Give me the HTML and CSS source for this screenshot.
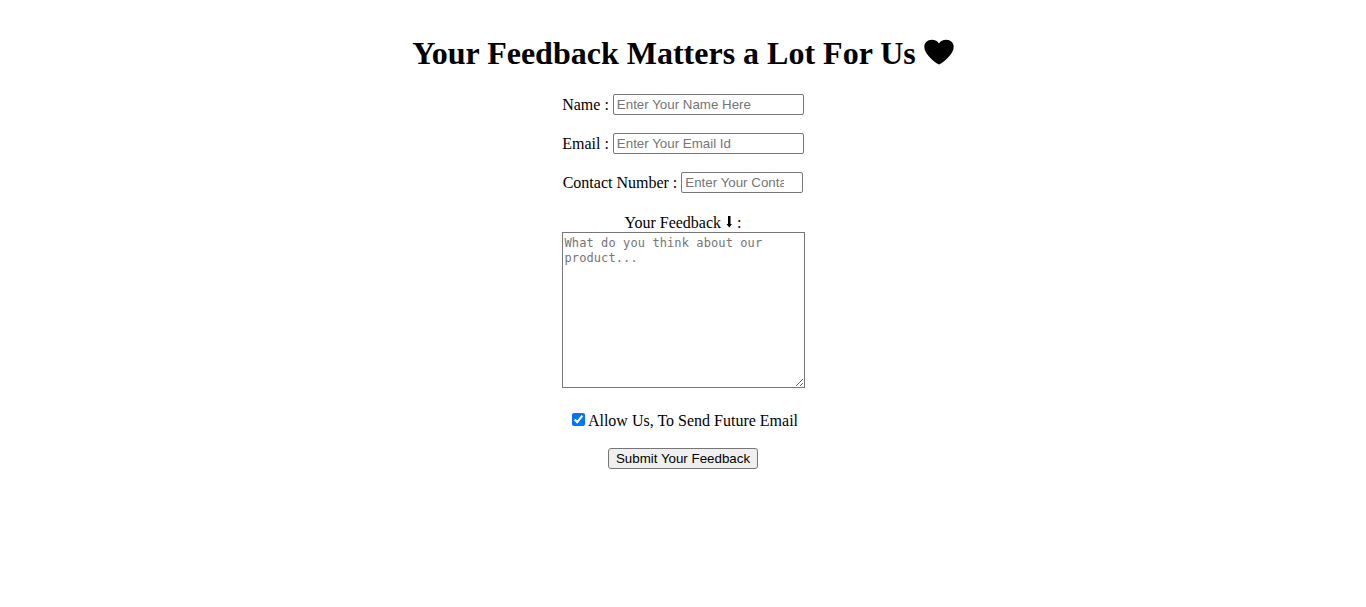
FILE: index.html
```html
<!DOCTYPE html>
<html lang="en">
<head>
<meta charset="utf-8">
<title>Feedback Form</title>
<link rel="stylesheet" href="styles.css">
</head>
<body>
<form class="feedback">
<h1 class="title">Your Feedback Matters a Lot For Us <svg class="heart" viewBox="0 0 30 26"><path d="M15 25.500C12 24 8.500 21.500 5 17.500C2 14 .3 11 .3 7.800C.3 3.800 3.500 .8 7.800 .8C11 .8 13.500 2 15 4.500C16.500 2 19 .8 22.200 .8C26.500 .8 29.700 3.800 29.700 7.800C29.700 11 28 14 25 17.500C21.500 21.500 18 24 15 25.500Z"/></svg></h1>
<div class="row name"><label for="name">Name :</label><input class="field" id="name" type="text" placeholder="Enter Your Name Here"></div>
<div class="row email"><label for="email">Email :</label><input class="field" id="email" type="email" placeholder="Enter Your Email Id"></div>
<div class="row contact"><label for="contact">Contact Number :</label><input class="field short" id="contact" type="number" placeholder="Enter Your Contact Number"></div>
<label class="message-label" for="message">Your Feedback <svg class="arrow" viewBox="0 0 8 12"><path d="M3 0H5.500V8H7L4.250 11.500L1.500 8H3Z"/></svg> :</label>
<textarea class="message" id="message" placeholder="What do you think about our product..."></textarea>
<div class="consent"><input class="check" id="allow" type="checkbox" checked><label for="allow">Allow Us, To Send Future Email</label></div>
<button class="submit" type="button">Submit Your Feedback</button>
</form>
</body>
</html>
```
FILE: styles.css
```css
body { margin: 0; background: #fff; color: #000; font: 16px "Liberation Serif", serif; }
.feedback { display: flex; flex-direction: column; align-items: center; }
.title { margin: 35px 0 22px; font-size: 32px; line-height: 37px; white-space: nowrap; }
.heart { width: 30px; height: 26px; vertical-align: -1px; }
.row { display: flex; align-items: center; gap: 4px; height: 21px; margin-bottom: 18px; white-space: nowrap; }
.field { box-sizing: border-box; width: 191px; height: 21px; margin: 0; padding: 1px 3px; border: 1px solid #767676; border-radius: 2px; font: 13.333px "Liberation Sans", sans-serif; }
.short { width: 122px; }
.message-label { margin-top: 3px; line-height: 18px; }
.arrow { width: 8px; height: 12px; }
.message { box-sizing: border-box; width: 243px; height: 156px; margin: 0; padding: 3px 2px 2px; border: 1px solid #767676; font: 12px/15px "DejaVu Sans Mono", monospace; letter-spacing: .1px; }
.consent { display: flex; align-items: center; gap: 3px; margin-top: 24px; padding-left: 4px; line-height: 18px; }
.check { width: 13px; height: 13px; margin: 0 0 4px; }
.submit { box-sizing: border-box; width: 150px; height: 21px; margin-top: 18px; padding: 1px 6px; border: 1px solid #767676; border-radius: 3px; background: #efefef; color: #000; font: 13.333px "Liberation Sans", sans-serif; white-space: nowrap; }
```
